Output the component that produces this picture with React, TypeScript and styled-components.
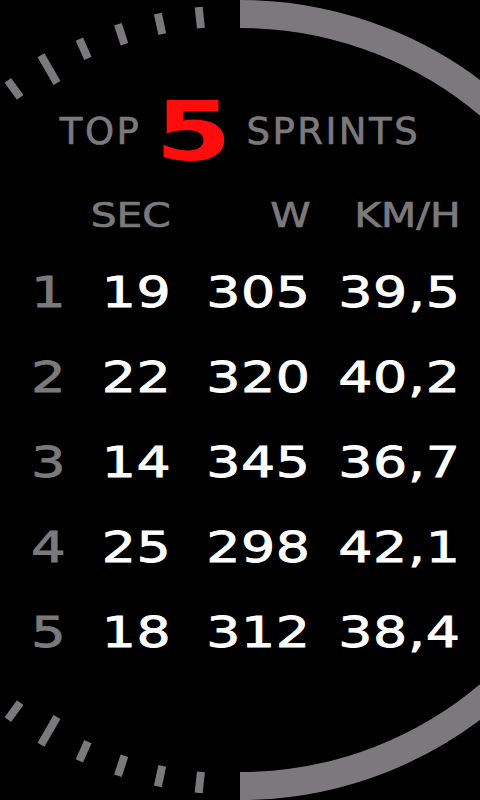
import React from "react";
import styled, { createGlobalStyle } from "styled-components";

const GRAY = "#7b797c";

const GlobalStyle = createGlobalStyle`
  html, body {
    margin: 0;
    padding: 0;
    background: #000;
  }
`;

const Page = styled.div`
  position: relative;
  width: 480px;
  height: 800px;
  overflow: hidden;
  background: #000;
  font-family: "DejaVu Sans", "Liberation Sans", sans-serif;
`;

const DialSvg = styled.svg`
  position: absolute;
  top: 0;
  left: 0;
  width: 480px;
  height: 800px;
`;

const Content = styled.div`
  position: relative;
  display: flex;
  flex-direction: column;
  padding-top: 100px;
`;

const TitleRow = styled.div`
  display: flex;
  justify-content: center;
  align-items: center;
  gap: 20px;
  height: 64px;
`;

const TitleWord = styled.span`
  color: ${GRAY};
  font-size: 37px;
  line-height: 64px;
  letter-spacing: 2.5px;
  -webkit-text-stroke: 0.7px ${GRAY};
`;

const BigFive = styled.span`
  display: inline-block;
  color: #ff0d0d;
  font-size: 82px;
  font-weight: bold;
  line-height: 64px;
  margin: 0 4px;
  transform: scaleX(1.35);
`;

const Table = styled.div`
  display: flex;
  flex-direction: column;
  margin-top: 31px;
`;

const Row = styled.div<{ $head?: boolean }>`
  display: grid;
  grid-template-columns: 96px 75px 140px 150px;
  align-items: center;
  height: ${(p) => (p.$head ? 40 : 85)}px;
  margin-bottom: ${(p) => (p.$head ? 15 : 0)}px;
`;

const Rank = styled.span`
  justify-self: center;
  color: ${GRAY};
  font-size: 42px;
  line-height: 85px;
  -webkit-text-stroke: 0.8px ${GRAY};
  transform: scaleX(1.3);
`;

const Value = styled.span`
  justify-self: end;
  display: inline-block;
  color: #fff;
  font-size: 42px;
  line-height: 85px;
  letter-spacing: 0.5px;
  -webkit-text-stroke: 0.8px #fff;
  transform: scaleX(1.28);
  transform-origin: right center;
`;

const Label = styled.span`
  justify-self: end;
  display: inline-block;
  color: ${GRAY};
  font-size: 34px;
  line-height: 40px;
  -webkit-text-stroke: 0.7px ${GRAY};
  transform: scaleX(1.2);
  transform-origin: right center;
`;

const sprints = [
  { sec: "19", w: "305", kmh: "39,5" },
  { sec: "22", w: "320", kmh: "40,2" },
  { sec: "14", w: "345", kmh: "36,7" },
  { sec: "25", w: "298", kmh: "42,1" },
  { sec: "18", w: "312", kmh: "38,4" },
];

const CX = 240;
const CY = 400;
const tickAngles = [6, 12, 18, 24, 30, 36];

const Dial: React.FC = () => {
  const ticks: React.ReactNode[] = [];
  tickAngles.forEach((deg) => {
    const a = (deg * Math.PI) / 180;
    const long = deg === 30;
    const r1 = long ? 366 : 374;
    const r2 = long ? 398 : 395;
    [-1, 1].forEach((side) => {
      const x1 = CX - r1 * Math.sin(a);
      const x2 = CX - r2 * Math.sin(a);
      const y1 = CY + side * r1 * Math.cos(a);
      const y2 = CY + side * r2 * Math.cos(a);
      ticks.push(
        <line
          key={`${deg}-${side}`}
          x1={x1}
          y1={y1}
          x2={x2}
          y2={y2}
          stroke={GRAY}
          strokeWidth={8}
        />
      );
    });
  });

  return (
    <DialSvg viewBox="0 0 480 800">
      <path
        d="M240 14 A386 386 0 0 1 240 786"
        fill="none"
        stroke={GRAY}
        strokeWidth={28}
      />
      {ticks}
    </DialSvg>
  );
};

const App: React.FC = () => (
  <Page>
    <GlobalStyle />
    <Dial />
    <Content>
      <TitleRow>
        <TitleWord>TOP</TitleWord>
        <BigFive>5</BigFive>
        <TitleWord>SPRINTS</TitleWord>
      </TitleRow>
      <Table>
        <Row $head>
          <span />
          <Label>SEC</Label>
          <Label>W</Label>
          <Label>KM/H</Label>
        </Row>
        {sprints.map((s, i) => (
          <Row key={i}>
            <Rank>{i + 1}</Rank>
            <Value>{s.sec}</Value>
            <Value>{s.w}</Value>
            <Value>{s.kmh}</Value>
          </Row>
        ))}
      </Table>
    </Content>
  </Page>
);

export default App;
